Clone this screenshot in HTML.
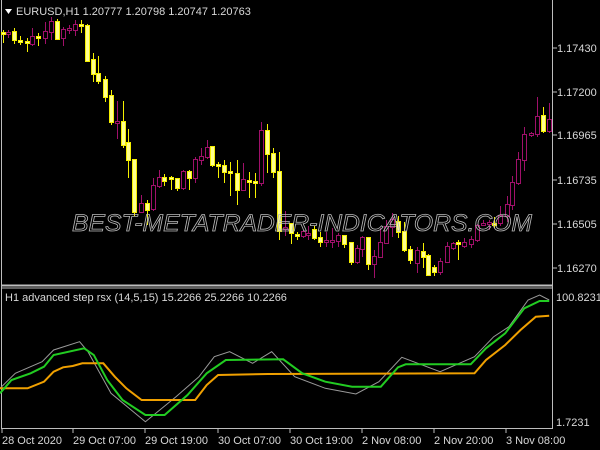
<!DOCTYPE html>
<html><head><meta charset="utf-8"><style>
html,body{margin:0;padding:0;background:#000;width:600px;height:450px;overflow:hidden}
svg{display:block}
text{font-family:"Liberation Sans",sans-serif;font-size:11px;fill:#d8d8d8}
</style></head><body>
<svg width="600" height="450" viewBox="0 0 600 450">
<rect width="600" height="450" fill="#000"/>
<g stroke="#bdbdbd" fill="none" stroke-width="1">
<line x1="1.5" y1="0" x2="1.5" y2="429"/>
<line x1="552.5" y1="0" x2="552.5" y2="429"/>
<line x1="1" y1="285.5" x2="553" y2="285.5" stroke-width="2"/>
<line x1="1" y1="288" x2="553" y2="288"/>
<line x1="1" y1="428.5" x2="553" y2="428.5"/>
</g>
<g stroke="#bdbdbd">
<line x1="553" y1="48" x2="557" y2="48"/><line x1="553" y1="92" x2="557" y2="92"/><line x1="553" y1="135" x2="557" y2="135"/><line x1="553" y1="180" x2="557" y2="180"/><line x1="553" y1="224" x2="557" y2="224"/><line x1="553" y1="268" x2="557" y2="268"/>
<line x1="73" y1="429" x2="73" y2="433"/><line x1="145" y1="429" x2="145" y2="433"/><line x1="218" y1="429" x2="218" y2="433"/><line x1="290" y1="429" x2="290" y2="433"/><line x1="362" y1="429" x2="362" y2="433"/><line x1="434" y1="429" x2="434" y2="433"/><line x1="506" y1="429" x2="506" y2="433"/><line x1="2" y1="429" x2="2" y2="433"/>
</g>
<text x="557" y="52">1.17430</text><text x="557" y="96">1.17200</text><text x="557" y="139">1.16965</text><text x="557" y="184">1.16735</text><text x="557" y="228">1.16505</text><text x="557" y="272">1.16270</text>
<text x="556" y="301">100.8231</text><text x="556" y="426">1.7231</text>
<text x="2" y="444">28 Oct 2020</text><text x="73" y="444">29 Oct 07:00</text><text x="145" y="444">29 Oct 19:00</text><text x="218" y="444">30 Oct 07:00</text><text x="290" y="444">30 Oct 19:00</text><text x="362" y="444">2 Nov 08:00</text><text x="434" y="444">2 Nov 20:00</text><text x="506" y="444">3 Nov 08:00</text>
<polygon points="5,9 12,9 8.5,14" fill="#fff"/>
<text x="16" y="15">EURUSD,H1  1.20777 1.20798 1.20747 1.20763</text>
<text x="5" y="301">H1 advanced step rsx (14,5,15) 15.2266 25.2266 10.2266</text>
<g id="c" stroke-width="1"></g>
<text x="72" y="231" textLength="460" lengthAdjust="spacingAndGlyphs" style="fill:none;stroke:#b8b8b8;stroke-width:0.8;font-size:24px;font-style:italic">BEST-METATRADER-INDICATORS.COM</text>
<polyline fill="none" stroke="#9a9a9a" stroke-width="1" points="0,388.3 15.3,373.3 42.1,361.7 53.6,350 79.6,341.7 88,351.7 111,393.3 145.4,421.7 176,396.7 199,376.7 214.3,356.7 229.6,351.7 252.6,363.3 271.7,351.7 294.7,376.7 325.3,388.3 355.9,394 378.9,381.7 401.8,357.3 440.1,371.7 474.5,356.7 493.7,336.7 509,326.7 528.1,300 539.6,295 549.2,300"/>
<polyline fill="none" stroke="#f0a000" stroke-width="2" points="0,388.3 27.6,388.3 44,381.7 53.6,371.7 63.1,367.3 72.7,366 82.3,363.3 103.3,363.3 114.8,376.7 126.3,388.3 141.6,400 195.2,400 206.7,385 218.1,375 267.9,374 474.5,373.3 486,360 505.2,345 520.5,330 535.8,316.7 549.2,315.7"/>
<polyline fill="none" stroke="#22cc22" stroke-width="2" points="0,393.3 11.5,380 30.6,373.3 44,366.7 53.6,355 84.2,348.3 93.8,355 107.2,380 122.5,400 145.4,415 164.6,415 187.5,395 206.7,373.3 225.8,360 283.2,359.3 302.3,373.3 325.3,381.7 352.1,386.7 380.8,386.7 398,367.3 405.7,364.3 470.7,364.3 486,348.3 505.2,333.3 524.3,308.3 539.6,301 549.2,301"/>
</svg>
<script>
var d=[
[3,'y',33,33,30,43],[8,'m',33,33,30,38],[14,'y',32,40,28,44],[20,'y',41,41,36,45],[27,'y',42,42,38,52],[32,'m',37,44,28,46],[38,'y',37,37,33,46],[45,'m',32,38,22,44],[51,'m',22,32,17,40],[57,'y',22,39,19,40],[63,'m',30,38,27,46],[69,'m',29,29,25,34],[75,'m',25,30,20,36],[81,'y',25,25,20,33],[87,'y',26,61,24,62],[93,'y',60,74,53,82],[98,'y',74,81,56,84],[105,'y',80,97,76,102],[111,'y',96,122,90,125],[117,'m',122,122,101,139],[123,'y',122,145,101,148],[128,'y',143,160,129,178],[134,'y',160,212,159,216],[141,'m',204,212,195,213],[147,'y',204,210,200,225],[153,'m',186,209,178,211],[159,'m',178,186,170,188],[164,'y',178,181,174,186],[171,'y',178,178,176,190],[177,'y',179,188,178,191],[183,'m',172,188,170,190],[189,'y',172,178,170,190],[195,'m',160,178,157,183],[201,'m',157,160,148,165],[207,'m',148,157,140,159],[212,'y',147,165,147,167],[218,'y',165,165,162,178],[224,'y',166,172,160,183],[230,'y',172,172,162,196],[237,'y',174,190,160,205],[243,'m',180,190,163,188],[249,'y',181,181,172,198],[255,'y',182,182,173,198],[261,'m',131,183,122,186],[267,'y',131,154,124,173],[273,'y',154,172,148,178],[279,'y',172,231,152,240],[285,'m',228,228,211,236],[291,'y',224,233,224,244],[297,'y',235,235,232,240],
[303,'m',232,236,230,238],[308,'m',234,234,226,240],[314,'y',230,238,226,240],[320,'y',238,242,232,247],[326,'m',241,241,232,247],[332,'m',241,241,228,248],[338,'m',236,241,233,247],[344,'y',236,244,235,248],[351,'y',243,262,243,265],[357,'m',249,262,245,264],[362,'m',238,249,236,257],[368,'y',238,264,238,270],[374,'m',257,264,250,278],[380,'m',243,257,228,258],[386,'m',227,243,220,244],[392,'m',220,227,213,237],[398,'y',222,232,216,238],[404,'y',232,250,222,252],[410,'y',250,260,246,264],[417,'m',251,263,247,273],[423,'y',252,257,243,268],[428,'y',256,275,254,276],[434,'y',268,272,265,276],[440,'m',262,272,258,275],[447,'m',247,262,242,262],[453,'m',244,248,242,250],[458,'y',243,243,240,260],[464,'m',243,246,238,248],[471,'m',240,244,236,248],[477,'m',226,240,224,242],[483,'m',224,224,220,226],[489,'m',223,223,220,230],[494,'y',224,224,217,228],[500,'m',216,223,206,226],[507,'m',205,216,196,222],[512,'m',183,205,176,210],[518,'m',160,183,152,185],[524,'m',135,160,127,171],[531,'m',134,134,132,137],[537,'m',117,134,97,137],[543,'y',116,131,107,133],[549,'m',120,131,103,133]];
var s='';d.forEach(function(c){var col=c[1]=='y'?'#f5f000':'#a0106a',fill=c[1]=='y'?'#ffff90':'#000';
s+='<line x1="'+(c[0]+0.5)+'" y1="'+c[4]+'" x2="'+(c[0]+0.5)+'" y2="'+c[5]+'" stroke="'+col+'"/>';
var h=Math.max(c[3]-c[2],1);s+='<rect x="'+(c[0]-1.5)+'" y="'+(c[2]-0.5)+'" width="4" height="'+(h+1)+'" fill="'+fill+'" stroke="'+col+'"/>';});
document.getElementById('c').innerHTML=s;
</script>
</body></html>
